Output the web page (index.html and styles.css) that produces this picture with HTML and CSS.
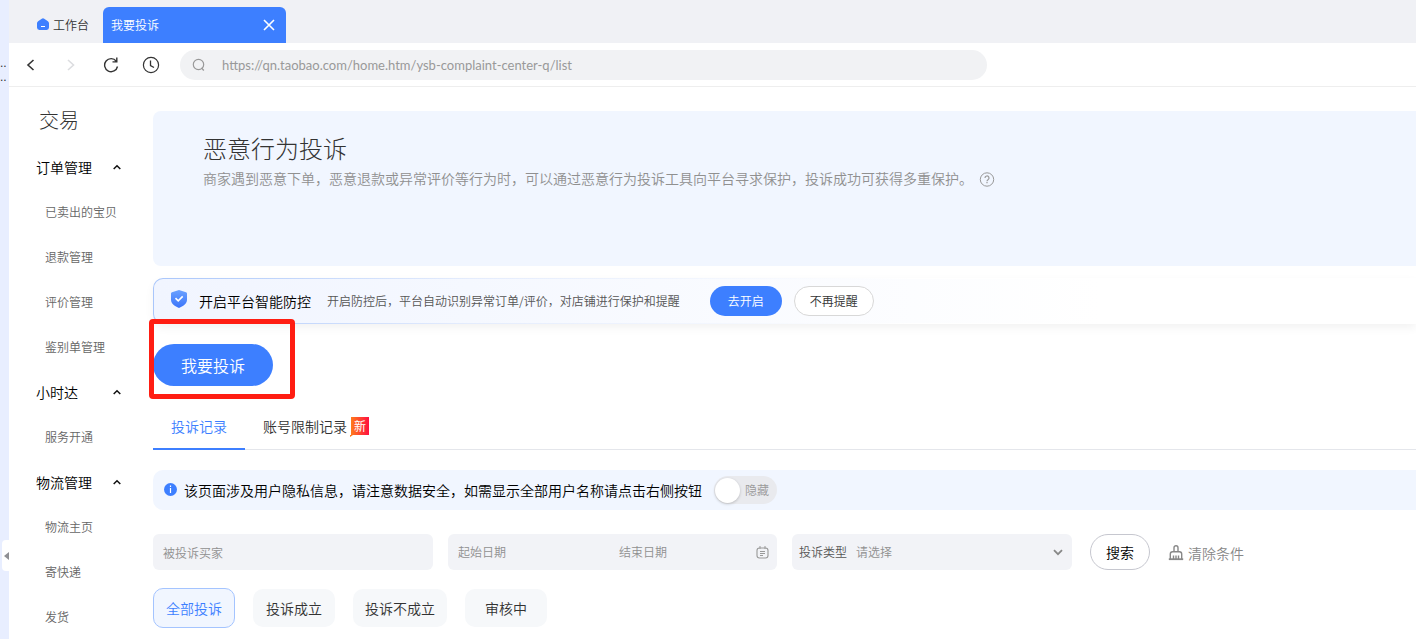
FILE: index.html
```html
<!DOCTYPE html>
<html lang="zh-CN">
<head>
<meta charset="utf-8">
<title>我要投诉</title>
<link rel="stylesheet" href="styles.css">
</head>
<body>
<div class="app">
  <aside class="rail">
    <div class="rail-text"><span>..</span><span>..</span></div>
    <button class="rail-handle" aria-label="收起"><svg width="5" height="8" viewBox="0 0 5 8"><path d="M5 0v8L0 4z" fill="#8f9094"/></svg></button>
  </aside>
  <div class="window">
    <header class="tabbar">
      <a class="home-tab" href="#">
        <svg width="12" height="14" viewBox="0 0 12 14"><path d="M4.800.8a2 2 0 0 1 2.400 0l3.700 2.500q1.100.8 1.100 2v4.300a2.400 2.400 0 0 1-2.400 2.400H2.400A2.400 2.400 0 0 1 0 9.600V5.300q0-1.200 1.100-2z" fill="#3d7fff"/><path d="M4 8.500h4" stroke="#fff"/></svg>
        <span>工作台</span>
      </a>
      <div class="open-tab">
        <span>我要投诉</span>
        <button class="close" aria-label="关闭"><svg width="12" height="12" viewBox="0 0 12 12"><path d="M1 1l10 10M11 1L1 11" stroke="#fff" stroke-width="1.600"/></svg></button>
      </div>
    </header>
    <div class="toolbar">
      <button class="nav" aria-label="后退"><svg width="16" height="16" viewBox="0 0 16 16"><path d="M10.500 3L5 8l5.500 5" fill="none" stroke="#333" stroke-width="1.600"/></svg></button>
      <button class="nav" aria-label="前进"><svg width="16" height="16" viewBox="0 0 16 16"><path d="M5 3l5.500 5L5 13" fill="none" stroke="#dcdde0" stroke-width="1.600"/></svg></button>
      <button class="nav" aria-label="刷新"><svg width="16" height="16" viewBox="0 0 16 16"><path d="M13.300 4.200A6.500 6.500 0 1 0 14.500 9.500M13.800 .5v4.400H9.500" fill="none" stroke="#333" stroke-width="1.400"/></svg></button>
      <button class="nav" aria-label="历史"><svg width="18" height="18" viewBox="0 0 18 18"><circle cx="9" cy="9" r="7.600" fill="none" stroke="#333" stroke-width="1.200"/><path d="M8.500 4.500v5l3.500 2" fill="none" stroke="#333" stroke-width="1.300"/></svg></button>
      <label class="address">
        <svg width="14" height="14" viewBox="0 0 14 14"><circle cx="6.500" cy="6.500" r="5.200" fill="none" stroke="#999" stroke-width="1.200"/><path d="M9.500 9.800l2.300 2.700" stroke="#999" stroke-width="1.300"/></svg>
        <input type="text" aria-label="地址" value="https://qn.taobao.com/home.htm/ysb-complaint-center-q/list">
      </label>
    </div>
    <div class="body">
      <nav class="side">
        <h2>交易</h2>
        <button class="group">订单管理<svg width="8" height="6" viewBox="0 0 8 6"><path d="M.7 5L4 1.700 7.300 5" fill="none" stroke="#111" stroke-width="1.500"/></svg></button>
        <a href="#">已卖出的宝贝</a>
        <a href="#">退款管理</a>
        <a href="#">评价管理</a>
        <a href="#">鉴别单管理</a>
        <button class="group">小时达<svg width="8" height="6" viewBox="0 0 8 6"><path d="M.7 5L4 1.700 7.300 5" fill="none" stroke="#111" stroke-width="1.500"/></svg></button>
        <a href="#">服务开通</a>
        <button class="group">物流管理<svg width="8" height="6" viewBox="0 0 8 6"><path d="M.7 5L4 1.700 7.300 5" fill="none" stroke="#111" stroke-width="1.500"/></svg></button>
        <a href="#">物流主页</a>
        <a href="#">寄快递</a>
        <a href="#">发货</a>
      </nav>
      <main class="main">
        <section class="banner">
          <h1>恶意行为投诉</h1>
          <p>商家遇到恶意下单，恶意退款或异常评价等行为时，可以通过恶意行为投诉工具向平台寻求保护，投诉成功可获得多重保护。<svg width="16" height="18" viewBox="0 0 16 18"><circle cx="8" cy="10.500" r="6.700" fill="none" stroke="#999"/><path d="M6 9a2 2 0 1 1 3 1.700q-1 .6-1 1.500M8 13.100v1.200" fill="none" stroke="#999" stroke-width="1.200"/></svg></p>
        </section>
        <section class="notice">
          <svg width="16" height="22" viewBox="0 0 16 22"><defs><linearGradient id="shield" x1="0" y1="0" x2="0" y2="1"><stop offset="0" stop-color="#6ba2ff"/><stop offset="1" stop-color="#3b74fa"/></linearGradient></defs><path d="M8 0l7 2.300q1 .3 1 1.300v6.200c0 4-4 6.600-8 8.200-4-1.600-8-4.200-8-8.200V3.600q0-1 1-1.300z" fill="url(#shield)"/><path d="M4.500 8.200l2.700 2.600L11.700 6.400" fill="none" stroke="#fff" stroke-width="1.600"/></svg>
          <strong>开启平台智能防控</strong>
          <span>开启防控后，平台自动识别异常订单/评价，对店铺进行保护和提醒</span>
          <button class="pill pill-blue">去开启</button>
          <button class="pill pill-plain">不再提醒</button>
        </section>
        <div class="action">
          <button class="complain">我要投诉</button>
          <div class="mark"></div>
        </div>
        <div class="tabs" role="tablist">
          <button class="tab current" role="tab">投诉记录</button>
          <button class="tab" role="tab">账号限制记录<span class="new">新</span></button>
        </div>
        <div class="alert">
          <svg width="14" height="14" viewBox="0 0 14 14"><circle cx="7.500" cy="6.500" r="6.500" fill="#3d7fff"/><path d="M7.500 2.500V4M7.500 5v5" stroke="#fff" stroke-width="1.200"/></svg>
          <span>该页面涉及用户隐私信息，请注意数据安全，如需显示全部用户名称请点击右侧按钮</span>
          <label class="switch"><input type="checkbox">隐藏</label>
        </div>
        <form class="filters">
          <input class="field buyer" type="text" aria-label="被投诉买家" placeholder="被投诉买家">
          <div class="field dates">
            <input type="text" aria-label="起始日期" placeholder="起始日期">
            <input type="text" aria-label="结束日期" placeholder="结束日期">
            <svg width="13" height="13" viewBox="0 0 13 13"><rect x="1" y="2" width="11" height="10" rx="2.500" fill="none" stroke="#999" stroke-width="1.100"/><path d="M4 0v3M9 0v3M4 5.500h5M4 7.500h5M4 9.500h3" stroke="#999" stroke-width="1"/></svg>
          </div>
          <div class="field type">
            <label for="type">投诉类型</label>
            <select id="type"><option>请选择</option></select>
            <svg width="10" height="7" viewBox="0 0 10 7"><path d="M1 1.200l4 4 4-4" fill="none" stroke="#888" stroke-width="1.800"/></svg>
          </div>
          <button class="search" type="button">搜索</button>
          <button class="clear" type="reset"><svg width="16" height="16" viewBox="0 0 16 16"><path d="M6 6.500V2.700a2 2 0 0 1 4 0v3.800M2.300 14V9q0-2.300 2.300-2.300h6.800q2.300 0 2.300 2.300v5M5.500 10.500V14M8 10.500V14M10.500 10.500V14" fill="none" stroke="#888" stroke-width="1.400"/><path d="M.8 14.200h14.400" stroke="#888" stroke-width="1.800"/></svg>清除条件</button>
        </form>
        <div class="chips">
          <button class="chip chosen">全部投诉</button>
          <button class="chip">投诉成立</button>
          <button class="chip">投诉不成立</button>
          <button class="chip">审核中</button>
        </div>
      </main>
    </div>
  </div>
</div>
</body>
</html>
```
FILE: styles.css
```css
* { box-sizing: border-box; }
body {
  margin: 0;
  overflow: hidden;
  background: #fff;
  color: #333;
  font: 350 14px/20px "Noto Sans CJK SC", sans-serif;
}
button, input, select { font: inherit; color: inherit; border: 0; background: none; padding: 0; margin: 0; outline: 0; }
button { white-space: nowrap; }
a { color: inherit; text-decoration: none; }
h1, h2, p { margin: 0; }
h1, h2 { font-weight: 300; }
svg { display: block; flex: none; }

.app { display: flex; min-height: 100vh; }
.rail { position: relative; flex: none; width: 9px; background: #e8eeff; overflow: hidden; }
.rail-text { display: flex; flex-direction: column; padding-top: 56px; font: 12px/14px "Liberation Sans", sans-serif; }
.rail-handle {
  position: absolute; top: 540px; left: 2px; width: 7px; height: 31px;
  display: flex; align-items: center; justify-content: flex-end;
  background: #fff; border-radius: 4px 0 0 4px;
}
.window { flex: 1; min-width: 0; }

.tabbar { display: flex; align-items: flex-end; height: 43px; background: #f0f1f5; font-size: 12px; }
.home-tab { display: flex; align-items: center; gap: 4px; height: 36px; padding: 0 14px 0 28px; }
.open-tab {
  display: flex; align-items: center; justify-content: space-between;
  width: 183px; height: 36px; padding: 0 11px 0 8px;
  background: #3d7fff; color: #fff; border-radius: 6px 6px 0 0;
}
.toolbar { display: flex; align-items: center; height: 44px; padding-left: 2px; border-bottom: 1px solid #eee; }
.nav { display: flex; align-items: center; justify-content: center; width: 40px; height: 30px; }
.address {
  display: flex; align-items: center; gap: 16px; width: 60%; max-width: 807px; height: 30px;
  margin-left: 9px; padding: 0 12px; background: #f1f2f4; border-radius: 15px; color: #999;
}
.address input { flex: 1; font: 13px/20px Lato, sans-serif; }

.body { display: flex; }
.side { flex: none; width: 144px; padding-top: 18px; display: flex; flex-direction: column; }
.side h2 { padding-left: 30px; font-size: 20px; line-height: 30px; margin-bottom: 9px; }
.side a { height: 45px; padding-left: 36px; font-size: 12px; line-height: 45px; color: #666; }
.group { display: flex; align-items: center; justify-content: space-between; height: 45px; padding: 0 32px 0 27px; color: #000; }

.main { flex: 1; min-width: 0; padding-top: 24px; }
.banner { height: 155px; padding: 20px 50px; background: #f1f6ff; border-radius: 8px 0 0 8px; }
.banner h1 { font-size: 24px; line-height: 34px; }
.banner p { display: flex; align-items: center; gap: 6px; line-height: 26px; color: #909090; white-space: nowrap; }
.notice {
  display: flex; align-items: center; height: 46px; margin-top: 12px; padding-left: 17px;
  border: 1px solid transparent; border-right: 0; border-radius: 10px 0 0 10px;
  background: linear-gradient(90deg, #f1f5ff, #f5f8ff 25%, #fff 75%) padding-box, linear-gradient(90deg, #a9c6fb, #e4ecfd 25%, #fff 60%) border-box;
  box-shadow: 0 4px 10px rgba(0, 0, 0, 0.05);
  white-space: nowrap;
}
.notice strong { margin: 0 16px 0 12px; font-weight: inherit; color: #000; }
.notice span { font-size: 12px; color: #555; margin-right: 30px; }
.pill { height: 30px; border-radius: 15px; font-size: 12px; }
.pill-blue { width: 72px; background: #3d7fff; color: #fff; }
.pill-plain { width: 80px; margin-left: 12px; border: 1px solid #d8d8d8; background: #fff; }

.action { position: relative; width: max-content; margin-top: 20px; }
.complain { display: block; width: 120px; height: 42px; border-radius: 21px; background: #3d7fff; color: #fff; font-size: 16px; }
.mark { position: absolute; top: -25px; left: -4px; width: 146px; height: 80px; border: 5px solid #ff1d12; border-radius: 4px; pointer-events: none; }

.tabs { display: flex; height: 46px; margin-top: 18px; border-bottom: 1px solid #e4e6eb; }
.tab { display: flex; align-items: center; gap: 4px; height: 46px; padding: 0 18px 2px; }
.current { padding-bottom: 0; color: #3d7fff; border-bottom: 2px solid #3d7fff; }
.new {
  position: relative; width: 18px; height: 18px; color: #fff; font-size: 12px; font-weight: 400; line-height: 18px; text-align: center;
  background: linear-gradient(90deg, #ff7a1c, #ff1040);
}
.new::after { content: ""; position: absolute; left: -1px; top: 18px; border-top: 2px solid #ff7a1c; border-right: 3px solid transparent; }

.alert { display: flex; align-items: center; height: 40px; margin-top: 20px; padding-left: 10px; background: #f1f6ff; border-radius: 10px 0 0 10px; color: #000; white-space: nowrap; }
.alert span { margin: 0 12px 0 7px; }
.switch { display: flex; align-items: center; gap: 5px; width: 63px; height: 28px; padding: 1px; border-radius: 14px; background: #e9eaee; color: #999; font-size: 12px; }
.switch input { appearance: none; width: 25px; height: 25px; border-radius: 50%; background: #fff; box-shadow: 0 1px 3px rgba(0, 0, 0, 0.2); }

.filters { display: flex; align-items: center; margin-top: 24px; font-size: 12px; }
.field { height: 36px; background: #f2f3f7; border-radius: 6px; }
.field::placeholder, .field input::placeholder { color: #909090; opacity: 1; }
.buyer { width: 280px; padding: 0 10px; }
.dates { display: flex; align-items: center; width: 329px; margin-left: 15px; padding: 0 8px 0 10px; }
.dates input { width: 137px; }
.dates input:first-child { width: 161px; }
.type { display: flex; align-items: center; width: 280px; margin-left: 15px; padding: 0 9px 0 7px; color: #555; }
.type select { flex: 1; height: 36px; margin-left: 9px; appearance: none; color: #909090; }
.search { width: 60px; height: 36px; margin-left: 18px; border: 1px solid #c6c7cf; border-radius: 18px; font-size: 14px; color: #000; }
.clear { display: flex; align-items: center; gap: 4px; margin: 2px 0 0 18px; font-size: 14px; color: #888; }

.chips { display: flex; align-items: center; gap: 18px; height: 40px; margin-top: 18px; }
.chip { height: 38px; padding: 0 12px; min-width: 82px; border-radius: 10px; background: #f6f8fa; }
.chosen { height: 40px; border: 1px solid #a4c4ff; background: #f1f6ff; color: #3d7fff; }
```
